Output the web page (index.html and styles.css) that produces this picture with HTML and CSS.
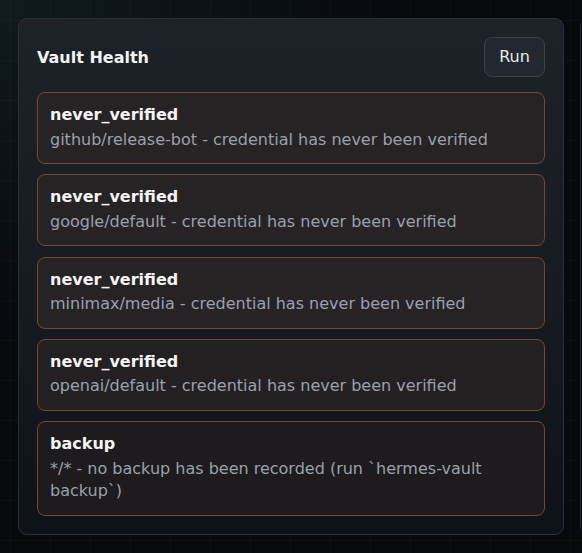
FILE: index.html
```html
<!DOCTYPE html>
<html lang="en">
<head>
<meta charset="utf-8">
<title>Vault Health</title>
<link rel="stylesheet" href="styles.css">
</head>
<body>
<main class="layout">
  <section class="panel">
    <header class="panel-head">
      <h2 class="panel-title">Vault Health</h2>
      <button class="btn" type="button">Run</button>
    </header>
    <ul class="issues">
      <li class="issue">
        <div class="issue-kind">never_verified</div>
        <div class="issue-desc">github/release-bot - credential has never been verified</div>
      </li>
      <li class="issue">
        <div class="issue-kind">never_verified</div>
        <div class="issue-desc">google/default - credential has never been verified</div>
      </li>
      <li class="issue">
        <div class="issue-kind">never_verified</div>
        <div class="issue-desc">minimax/media - credential has never been verified</div>
      </li>
      <li class="issue">
        <div class="issue-kind">never_verified</div>
        <div class="issue-desc">openai/default - credential has never been verified</div>
      </li>
      <li class="issue">
        <div class="issue-kind">backup</div>
        <div class="issue-desc">*/* - no backup has been recorded (run `hermes-vault backup`)</div>
      </li>
    </ul>
  </section>
  <section class="panel panel-next"></section>
</main>
</body>
</html>
```
FILE: styles.css
```css
* { box-sizing: border-box; }
html, body {
  margin: 0;
  height: 100%;
  overflow: hidden;
}
body {
  font-family: "DejaVu Sans", "Noto Sans", sans-serif;
  font-size: 16px;
  line-height: 1.4;
  color: #eef0f2;
  background-color: #07090d;
  background-image:
    linear-gradient(rgba(255,255,255,0.022) 1px, transparent 1px),
    linear-gradient(90deg, rgba(255,255,255,0.022) 1px, transparent 1px),
    radial-gradient(ellipse 70% 60% at 0% 0%, #0f1b1e 0%, #0b1115 50%, #07090d 100%);
  background-size: 40px 40px, 40px 40px, 100% 100%;
  background-position: -30px -20px, -30px -20px, 0 0;
}
.layout {
  display: grid;
  grid-template-columns: 546px 546px;
  align-items: start;
  gap: 16px;
  padding: 18px;
  width: 100vw;
  height: 100vh;
  overflow: hidden;
}
.panel {
  border: 1px solid #2a3038;
  border-radius: 9px;
  background: linear-gradient(180deg, #1d2229 0%, #161a21 55%, #0e1218 100%);
  padding: 18px;
}
.panel-next {
  background: #05070a;
  border-color: #23282f;
  height: 516px;
}
.panel-head {
  display: flex;
  align-items: center;
  justify-content: space-between;
  margin-bottom: 15px;
}
.panel-title {
  margin: 0;
  padding-top: 2px;
  font-size: 16px;
  line-height: 22px;
  font-weight: 700;
  color: #f2f3f5;
}
.btn {
  font-family: inherit;
  font-size: 16px;
  line-height: 24px;
  color: #e8eaed;
  background: #232830;
  border: 1px solid #3a414b;
  border-radius: 8px;
  padding: 7px 14px;
  height: 40px;
  width: 61px;
}
.issues {
  list-style: none;
  margin: 0;
  padding: 0;
  display: flex;
  flex-direction: column;
  gap: 10.25px;
}
.issue {
  border: 1px solid #7a4630;
  border-radius: 8px;
  background: #262325;
  padding: 11px 12px 12px;
  display: flex;
  flex-direction: column;
  gap: 2.5px;
}
.issue:nth-child(4) { background: #232022; }
.issue:nth-child(5) { background: #1d1b1d; }
.issue-kind {
  font-weight: 700;
  color: #f4f4f5;
  line-height: 22px;
}
.issue-desc {
  color: #99a1ab;
  line-height: 22.5px;
}
```
